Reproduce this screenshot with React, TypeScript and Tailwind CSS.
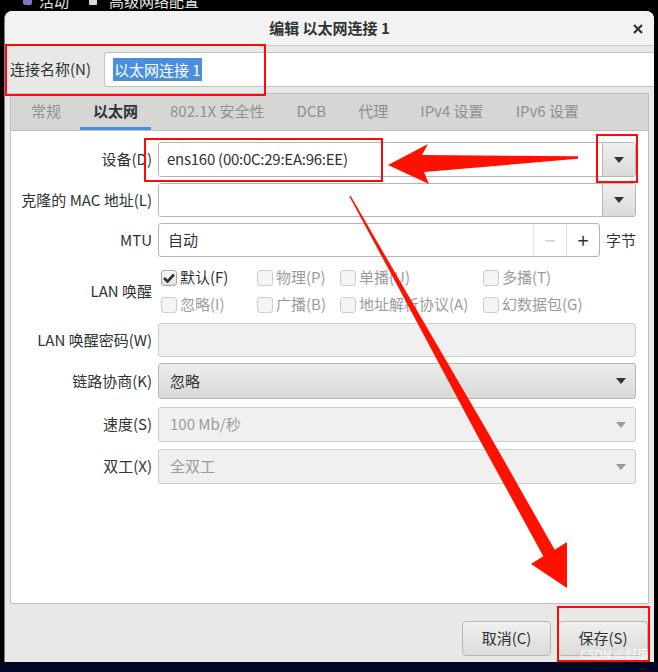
import React from "react";

const FONT = "font-['Noto_Sans_CJK_SC','Noto_Sans',sans-serif]";

const Tri = ({ muted = false }: { muted?: boolean }) => (
  <svg width="10" height="6" viewBox="0 0 10 6">
    <path d="M0 0 L10 0 L5 6 Z" fill={muted ? "#9a9c9c" : "#2e3436"} />
  </svg>
);

const Check = ({ label, checked = false }: { label: string; checked?: boolean }) => (
  <div className="flex items-center gap-[3px]">
    {checked ? (
      <div className="flex h-[16px] w-[16px] items-center justify-center rounded-[3px] border border-[#a8a8a5] bg-gradient-to-b from-[#fafafa] to-[#e2e2e1]">
        <svg width="12" height="10" viewBox="0 0 12 10">
          <path d="M1 5 L4.5 8.5 L11 1.5" stroke="#2e3436" strokeWidth="2.6" fill="none" />
        </svg>
      </div>
    ) : (
      <div className="h-[16px] w-[16px] rounded-[3px] border border-[#cdcdca] bg-[#f4f4f4]" />
    )}
    <span className={checked ? "text-[#2e3436]" : "text-[#9a9c9c]"}>{label}</span>
  </div>
);

const Label = ({ children }: { children: React.ReactNode }) => (
  <div className="w-[141px] shrink-0 text-right text-[#2e3436]">{children}</div>
);

const tabs = ["常规", "以太网", "802.1X 安全性", "DCB", "代理", "IPv4 设置", "IPv6 设置"];

const App = () => {
  return (
    <div className={`relative h-[672px] w-[658px] overflow-hidden bg-black text-[15px] ${FONT}`}>
      {/* top bar, mostly cut off */}
      <div className="h-[11px] overflow-hidden">
        <div className="-mt-[9px] flex h-[20px] items-center text-[15px] leading-[20px] text-[#e6e6e6]">
          <div className="ml-[23px] h-[8px] w-[9px] rounded-[2px] bg-[#8a6fc6]" />
          <span className="ml-[7px]">活动</span>
          <div className="ml-[20px] h-[8px] w-[8px] rounded-[1px] bg-[#d8d8d8]" />
          <span className="ml-[12px]">高级网络配置</span>
        </div>
      </div>

      {/* dialog */}
      <div className="ml-[4px] flex h-[651px] w-[650px] flex-col overflow-hidden rounded-t-[8px] border-l border-[#7d7d7d] bg-[#e8e8e7]">
        <div className="relative flex h-[35px] shrink-0 items-center justify-center border-b border-[#c9c9c6] bg-[#f2f2f2]">
          <span className="font-bold text-[#2e3436]">编辑 以太网连接 1</span>
          <svg className="absolute left-[628px] top-[13px]" width="10" height="10" viewBox="0 0 10 10">
            <path d="M1 1 L9 9 M9 1 L1 9" stroke="#2e3436" strokeWidth="2.2" />
          </svg>
        </div>

        {/* name row */}
        <div className="flex h-[47px] shrink-0 items-center pb-[1px] pl-[5px]">
          <span className="w-[94px] text-[#2e3436]">连接名称(N)</span>
          <div className="flex h-[35px] flex-1 items-center rounded-l-[3px] border border-r-0 border-[#c4c4c1] bg-white pl-[8px]">
            <span className="bg-[#4a90d9] px-[1px] leading-[23px] text-white">以太网连接 1</span>
          </div>
        </div>

        {/* notebook */}
        <div className="mx-[5px] flex shrink-0 flex-col">
          <div className="flex h-[37px] items-end gap-[6px] border border-b-0 border-[#bfbfbc] bg-[#d6d6d5] pl-[7px]">
            {tabs.map((t, i) => (
              <div
                key={t}
                className={
                  i === 1
                    ? "flex h-[37px] items-center border-b-[3px] border-[#4a90d9] px-[13px] pt-[3px] font-bold text-[#2e3436]"
                    : "flex h-[37px] items-center border-b-[3px] border-transparent px-[13px] pt-[3px] text-[#8e9192]"
                }
              >
                {t}
              </div>
            ))}
          </div>

          <div className="flex h-[474px] flex-col border border-[#bfbfbc] bg-white pr-[12px] pt-[11px]">
            {/* device */}
            <div className="flex items-center gap-[6px]">
              <Label>设备(D)</Label>
              <div className="flex h-[35px] flex-1 overflow-hidden rounded-[3px] border border-[#b6b6b3]">
                <div className="flex flex-1 items-center bg-white pl-[8px] tracking-[-0.25px] text-[#2e3436]">ens160 (00:0C:29:EA:96:EE)</div>
                <div className="flex w-[33px] items-center justify-center border-l border-[#b6b6b3] bg-gradient-to-b from-[#efefee] to-[#dadad9]">
                  <Tri />
                </div>
              </div>
            </div>

            {/* mac */}
            <div className="mt-[6px] flex items-center gap-[6px]">
              <Label>克隆的 MAC 地址(L)</Label>
              <div className="flex h-[34px] flex-1 overflow-hidden rounded-[3px] border border-[#b6b6b3]">
                <div className="flex-1 bg-white" />
                <div className="flex w-[33px] items-center justify-center border-l border-[#b6b6b3] bg-gradient-to-b from-[#efefee] to-[#dadad9]">
                  <Tri />
                </div>
              </div>
            </div>

            {/* mtu */}
            <div className="mt-[6px] flex items-center gap-[6px]">
              <Label>MTU</Label>
              <div className="flex h-[34px] flex-1 overflow-hidden rounded-[3px] border border-[#b6b6b3] bg-white">
                <div className="flex flex-1 items-center pl-[9px] text-[#2e3436]">自动</div>
                <div className="flex w-[33px] items-center justify-center border-l border-[#e4e4e2] text-[20px] text-[#d0d0ce]">−</div>
                <div className="flex w-[33px] items-center justify-center border-l border-[#e4e4e2] text-[20px] text-[#2e3436]">+</div>
              </div>
              <span className="text-[#2e3436]">字节</span>
            </div>

            {/* wake on lan */}
            <div className="mt-[7px] flex items-center gap-[6px]">
              <Label>LAN 唤醒</Label>
              <div className="grid flex-1 grid-cols-[96px_83px_143px_1fr] grid-rows-[27px_27px] items-center pl-[3px]">
                <Check label="默认(F)" checked />
                <Check label="物理(P)" />
                <Check label="单播(U)" />
                <Check label="多播(T)" />
                <Check label="忽略(I)" />
                <Check label="广播(B)" />
                <Check label="地址解析协议(A)" />
                <Check label="幻数据包(G)" />
              </div>
            </div>

            {/* password */}
            <div className="mt-[5px] flex items-center gap-[6px]">
              <Label>LAN 唤醒密码(W)</Label>
              <div className="h-[34px] flex-1 rounded-[3px] border border-[#cdcdca] bg-[#f0f0f0]" />
            </div>

            {/* link negotiation */}
            <div className="mt-[6px] flex items-center gap-[6px]">
              <Label>链路协商(K)</Label>
              <div className="flex h-[36px] flex-1 items-center justify-between rounded-[3px] border border-[#b6b6b3] bg-gradient-to-b from-[#ececeb] to-[#d9d9d8] pl-[11px] pr-[9px] text-[#2e3436]">
                <span>忽略</span>
                <Tri />
              </div>
            </div>

            {/* speed */}
            <div className="mt-[8px] flex items-center gap-[6px]">
              <Label>速度(S)</Label>
              <div className="flex h-[35px] flex-1 items-center justify-between rounded-[3px] border border-[#cdcdca] bg-[#f0f0f0] pl-[11px] pr-[9px] text-[#9a9c9c]">
                <span>100 Mb/秒</span>
                <Tri muted />
              </div>
            </div>

            {/* duplex */}
            <div className="mt-[7px] flex items-center gap-[6px]">
              <Label>双工(X)</Label>
              <div className="flex h-[35px] flex-1 items-center justify-between rounded-[3px] border border-[#cdcdca] bg-[#f0f0f0] pl-[11px] pr-[9px] text-[#9a9c9c]">
                <span>全双工</span>
                <Tri muted />
              </div>
            </div>
          </div>
        </div>

        {/* actions */}
        <div className="flex flex-1 items-start justify-end gap-[7px] pr-[6px] pt-[17px]">
          <button className="h-[35px] w-[89px] rounded-[4px] border border-[#b6b6b3] bg-gradient-to-b from-[#f0f0ef] to-[#dbdbda] text-[#2e3436]">
            取消(C)
          </button>
          <button className="h-[35px] w-[90px] rounded-[4px] border border-[#b6b6b3] bg-gradient-to-b from-[#f0f0ef] to-[#dbdbda] text-[#2e3436]">
            保存(S)
          </button>
        </div>
      </div>

      {/* bottom dark strip */}
      <div className="h-[10px] bg-[#020623]" />

      {/* watermark */}
      <span className="absolute left-[580px] top-[645px] text-[12px] text-white/80">CSDN @好度</span>

      {/* red annotations */}
      <svg className="pointer-events-none absolute left-0 top-0" width="658" height="672" viewBox="0 0 658 672">
        <g fill="none" stroke="#ff0a0a" strokeWidth="2">
          <rect x="6" y="45" width="259" height="50" />
          <rect x="145" y="139" width="237" height="42" />
          <rect x="597" y="135" width="40" height="47" />
          <rect x="558" y="607" width="91" height="54" />
        </g>
        <path
          d="M578 156.2 L422 155 L428 144 L388 165 L429 184 L424 172 L578 158.8 Z"
          fill="#ff1100"
        />
        <path
          d="M350.6 195.8 L410.2 298.8 L490.8 437.3 L554.7 549.8 L567 542 L567 588 L531 564 L543.3 556.2 L481.2 442.7 L405.8 301.2 L349.4 196.4 Z"
          fill="#ff1100"
        />
      </svg>
    </div>
  );
};

export default App;
